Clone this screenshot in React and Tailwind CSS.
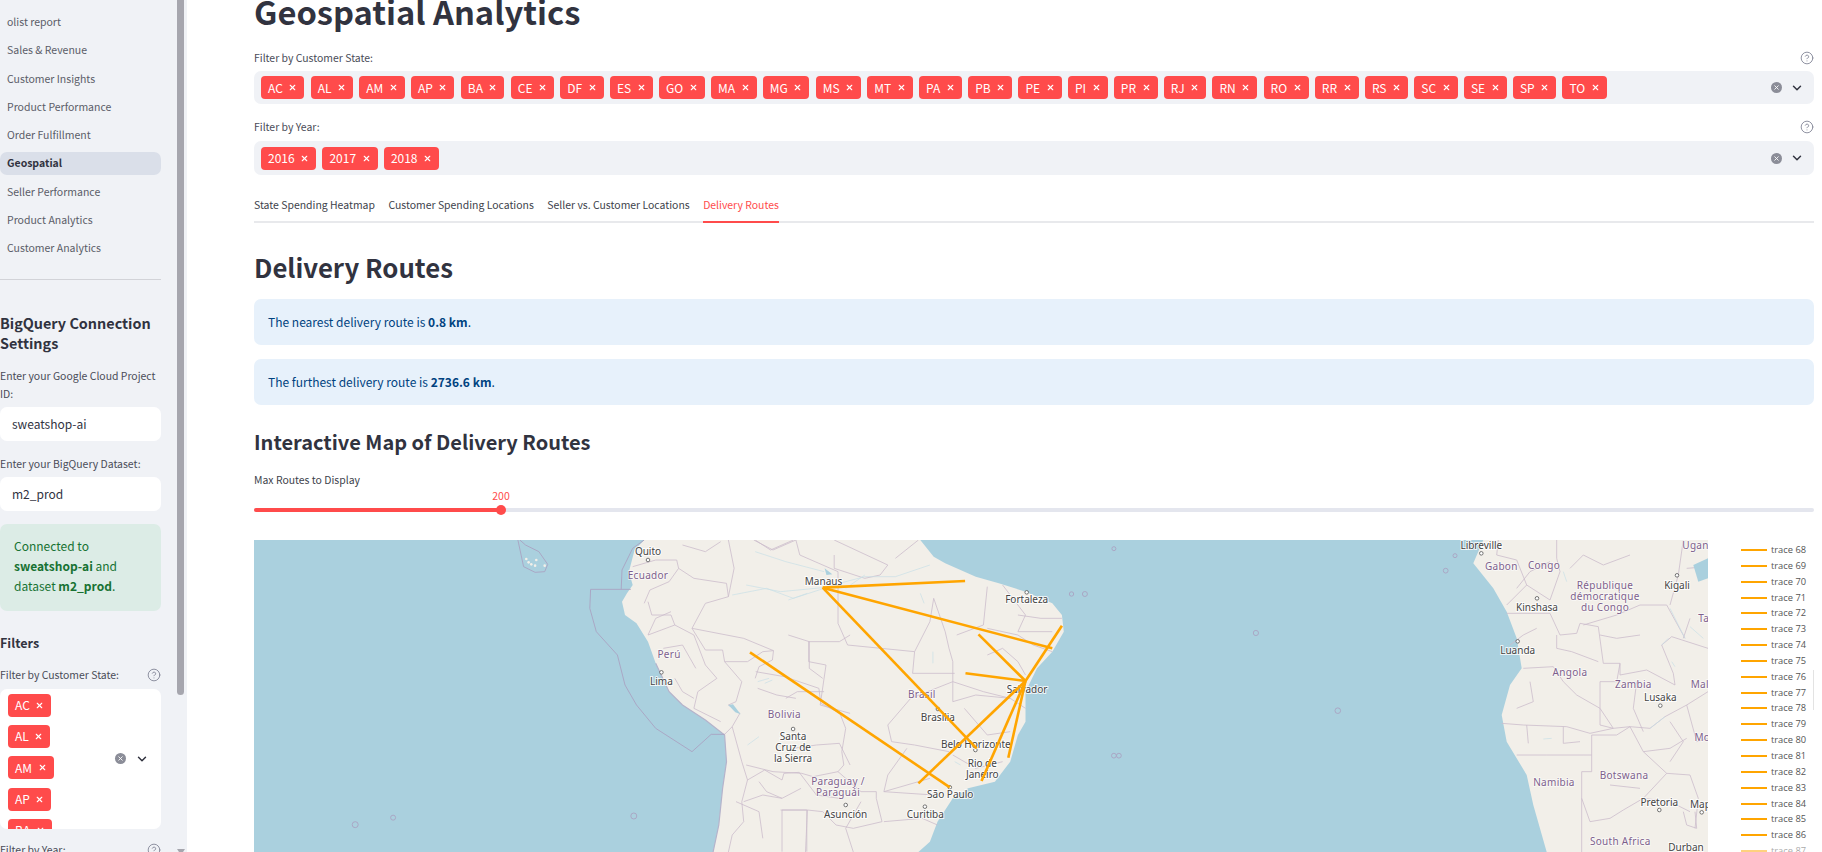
import React from "react";
import { X, ChevronDown, CircleHelp } from "lucide-react";

const z6 = ([x, y]) => [+(x / 2.613 - 5).toFixed(1), y / 3 - 5];
const z7 = ([x, y]) => [+(495 + x / 2.613).toFixed(1), y / 3 - 5];
const z8 = ([x, y]) => [+(1095 + x / 3).toFixed(1), y / 3 - 5];
const pts = (f, a) => a.map((p) => f(p).join(",")).join(" ");

const saWest = [[1030,15],[1005,45],[990,110],[1000,150],[985,175],[972,200],[980,240],[1010,265],[1040,320],[1060,385],[1095,470],[1130,510],[1190,555],[1240,600],[1245,680],[1235,760],[1225,870],[1210,951]];
const saEast = [[440,951],[470,920],[490,860],[530,790],[570,760],[640,740],[680,680],[700,600],[720,560],[720,470],[750,400],[790,350],[820,290],[815,240],[790,205],[720,170],[650,145],[590,125],[510,85],[480,65],[445,15]];
const africa = [[400,15],[370,85],[430,160],[470,230],[500,310],[515,400],[480,450],[455,540],[470,620],[530,720],[550,810],[590,951],[1074,951],[1074,15]];

const b6 = [
  [[1000,95],[1060,75],[1115,75],[1120,100],[1095,140],[1045,165],[1030,205]],
  [[1120,100],[1160,130],[1245,145],[1250,185]],
  [[1250,15],[1265,100],[1250,185],[1190,205],[1155,280],[1190,345],[1235,345],[1240,380],[1300,380],[1340,350],[1368,347],[1365,375],[1330,395],[1320,430]],
  [[1155,280],[1290,310],[1368,347]],
  [[1240,380],[1285,440],[1270,500],[1250,510],[1280,535],[1260,575],[1240,598]],
  [[1260,575],[1285,680],[1300,735],[1285,800],[1290,860],[1260,900],[1250,951]],
  [[1300,735],[1345,705],[1390,735],[1395,715],[1435,712],[1480,780],[1540,790]],
  [[1100,230],[1060,250],[1040,300],[1110,270],[1160,300],[1190,390],[1220,430],[1170,470],[1160,520],[1230,560]],
  [[1040,200],[1050,240],[1100,240],[1110,270]],
  [[1080,340],[1130,330],[1165,400]],
  [[1110,430],[1130,470],[1160,490]],
  [[1390,950],[1390,825],[1455,825],[1455,950]],
  [[1290,800],[1340,780],[1390,790],[1440,760]],
  [[1460,320],[1540,320],[1568,300]],
  [[1460,320],[1460,380],[1505,390],[1490,510],[1568,535]],
  [[1400,490],[1430,470],[1500,470]],
  [[1420,640],[1480,630],[1540,625],[1568,690]],
  [[1330,740],[1350,770],[1390,790]],
  [[1270,800],[1330,830],[1340,910]],
  [[1130,30],[1190,50],[1230,20]],
  [[1320,15],[1360,45],[1420,15]],
];
const b7 = [
  [[15,410],[90,425],[180,460],[185,505],[235,535],[250,580],[240,650],[245,690],[230,710],[290,770],[330,770],[330,790],[345,860],[270,880],[225,870],[190,830],[150,825],[145,951]],
  [[80,825],[150,825]],
  [[-10,690],[60,710],[135,715],[165,725],[230,710]],
  [[120,15],[130,60],[230,110],[230,265],[255,330],[430,350],[425,415],[535,415]],
  [[155,320],[155,400],[190,430]],
  [[220,60],[220,100],[300,130],[340,120],[360,90]],
  [[480,190],[510,290],[520,340],[530,380],[530,440],[530,500],[590,480],[680,490]],
  [[430,350],[470,260],[480,190]],
  [[540,300],[610,270],[620,155]],
  [[620,280],[700,300],[740,330],[790,350]],
  [[660,150],[720,240],[700,290]],
  [[360,570],[420,490],[530,440]],
  [[360,570],[370,620],[430,630],[520,650]],
  [[410,640],[360,720],[350,770],[470,730]],
  [[350,770],[480,780]],
  [[350,860],[450,850],[490,870]],
  [[680,490],[720,520]],
  [[530,660],[590,700],[660,680]],
  [[10,15],[60,45],[120,15]],
  [[220,15],[360,90]],
  [[440,15],[380,70]],
  [[620,360],[660,340],[700,380],[720,420]],
  [[530,440],[610,470],[680,490]],
  [[560,520],[620,600],[680,590]],
  [[700,240],[760,250],[815,250]],
  [[700,290],[790,290]],
  [[290,800],[250,880],[270,951]],
  [[100,300],[155,320]],
  [[20,460],[70,480],[120,490]],
];
const b8 = [
  [[445,15],[440,60],[500,75],[530,150]],
  [[470,235],[600,235],[630,300],[680,295],[690,265],[745,275],[760,385],[810,385],[810,420],[890,405],[975,450],[970,415],[935,330],[965,305],[1074,340]],
  [[530,150],[600,195],[630,110],[620,70],[620,15]],
  [[530,150],[470,210]],
  [[870,210],[950,210],[1005,310]],
  [[960,210],[985,120],[1000,15]],
  [[750,440],[810,440]],
  [[750,440],[750,570],[790,580],[840,575],[900,580],[945,545],[1010,510],[1074,470]],
  [[455,565],[520,570],[650,575],[720,595],[790,580]],
  [[840,575],[880,650],[950,715],[1020,720],[1045,790],[1035,880]],
  [[725,600],[725,710],[695,710],[695,951]],
  [[725,600],[800,600],[840,575]],
  [[695,790],[720,860],[780,850],[820,825],[880,790],[950,715]],
  [[530,570],[535,625]],[[640,575],[640,625],[690,620]],
  [[500,660],[590,660],[700,660],[725,660]],
  [[810,385],[800,440]],
  [[620,300],[620,340],[665,350],[745,380]],
  [[640,440],[680,480],[750,520],[790,580]],
  [[520,400],[610,395],[640,440]],
  [[1010,510],[1040,620],[1074,610]],
  [[880,650],[960,640],[1010,610]],
  [[780,750],[870,760]],
  [[880,790],[960,800],[1020,830]],
  [[1000,830],[1010,870],[1040,880],[1035,830]],
  [[870,300],[800,310],[750,300]],
  [[1010,100],[1074,95]],
  [[1020,250],[1000,310]],
  [[480,330],[520,300],[560,280]],
  [[540,440],[550,500],[500,520]],
  [[860,440],[850,520],[880,590]],
  [[660,100],[700,60],[760,90],[840,60]],
  [[700,270],[800,240],[870,210]],
  [[500,160],[540,110],[600,80]],
  [[960,560],[1000,620],[960,680]],
];
const rivers = [
  [z7, [[-10,150],[80,170],[190,158],[300,125],[380,125],[470,90]]],
  [z7, [[100,195],[150,175]]],
  [z7, [[250,160],[300,120]]],
  [z7, [[478,350],[478,385]]],
  [z7, [[445,175],[455,205]]],
  [z7, [[20,440],[50,430]]],
  [z6, [[1260,180],[1350,160],[1420,190],[1500,160]]],
  [z6, [[1320,50],[1400,80],[1500,110]]],
  [z6, [[1345,445],[1365,435]]],
  [z6, [[1300,630],[1330,605]]],
  [z7, [[535,680],[550,690]]],
  [z8, [[640,110],[650,140]]],
  [z8, [[580,612],[605,610]]],
  [z8, [[935,330],[955,310]]],
  [z8, [[965,380],[975,395]]],
  [z8, [[900,580],[945,545]]],
  [z8, [[960,220],[1005,310]]],
  [z8, [[1020,275],[1060,310]]],
];
const lakes = [
  [z8, [[1030,90],[1074,70],[1074,130],[1045,140]]],
  [z6, [[1250,510],[1262,508],[1282,538],[1268,532]]],
  [z7, [[195,100],[215,118],[200,120]]],
];
const rings = [
  [z6, 275, 869, 3], [z6, 374, 848, 2.5], [z6, 1003, 843, 3],
  [z7, 951, 41, 2], [z7, 840, 177, 2.2], [z7, 875, 177, 2.5], [z7, 1322, 294, 2.6], [z7, 1536, 527, 2.8], [z7, 951, 662, 2.4], [z7, 964, 662, 2.4],
  [z8, 287, 107, 2.4], [z8, 315, 62, 2],
];
const galapagos = [[722,72],[735,88],[748,75],[745,92],[770,92],[728,82]];
const dots = [
  [z6, 1040, 75], [z6, 1075, 412], [z6, 1419, 582], [z7, 723, 172], [z7, 491, 522], [z7, 589, 645], [z7, 522, 757], [z7, 457, 815], [z7, 250, 810],
  [z8, 394, 55], [z8, 981, 121], [z8, 561, 190], [z8, 503, 319], [z8, 931, 512], [z8, 928, 825], [z8, 1055, 832],
];
const cityLabels = [
  [z6,"Quito",1040,49],[z6,"Lima",1075,437],[z6,"Santa",1419,603],[z6,"Cruz de",1419,636],[z6,"la Sierra",1419,669],
  [z7,"Manaus",192,137],[z7,"Fortaleza",723,193],[z7,"Brasília",491,547],[z7,"Salvador",724,461],[z7,"Belo Horizonte",590,626],[z7,"Rio de",607,685],[z7,"Janeiro",607,718],[z7,"São Paulo",523,778],[z7,"Curitiba",458,837],[z7,"Asunción",250,837],
  [z8,"Libreville",394,31],[z8,"Kigali",981,150],[z8,"Kinshasa",561,215],[z8,"Luanda",503,346],[z8,"Lusaka",931,487],[z8,"Pretoria",928,801],[z8,"Maputo",1075,808],[z8,"Durban",1008,937],
];
const countryLabels = [
  [z6,"Ecuador",1040,119],[z6,"Perú",1095,358],[z6,"Bolivia",1396,537],
  [z7,"Brasil",449,478],[z7,"Paraguay /",230,738],[z7,"Paraguái",230,772],
  [z8,"Gabon",454,94],[z8,"Congo",582,90],[z8,"République",765,150],[z8,"démocratique",765,183],[z8,"du Congo",765,217],[z8,"Uganda",1055,30],[z8,"Tanzania",1110,250],[z8,"Angola",660,410],[z8,"Zambia",850,446],[z8,"Malawi",1075,447],[z8,"Moçambique",1130,607],[z8,"Namibia",612,740],[z8,"Botswana",822,720],[z8,"South Africa",811,917],
];
const H = [190, 158], S = [720, 438];
const routes = [
  [H,[562,138]],[H,[790,340]],[H,[592,640]],
  [S,[597,298]],[S,[563,415]],[S,[815,272]],[S,[440,745]],[S,[605,738]],[S,[675,668]],
  [[0,352],[522,757]],
];

function MapSvg() {
  return (
    <svg viewBox="-1 0 1454 312" width="1454" height="312" className="block shrink-0 bg-[#aad0de]">
      <polygon points={pts(z6, saWest) + " " + pts(z7, saEast)} fill="#f2efe9" />
      <polygon points={pts(z8, africa)} fill="#f2efe9" />
      <polygon points={pts(z6, [[1030,15],[1250,15],[1240,100],[1000,100]])} fill="#f2efe9" />
      <polyline points={pts(z6, saWest.slice(9))} fill="none" stroke="#b5b3cb" strokeWidth="1.2" />
      <g fill="none" stroke="#cbbccb" strokeWidth="0.8">
        {b6.map((b, i) => <polyline key={i} points={pts(z6, b)} />)}
        {b7.map((b, i) => <polyline key={i} points={pts(z7, b)} />)}
        {b8.map((b, i) => <polyline key={i} points={pts(z8, b)} />)}
      </g>
      <g fill="none" stroke="#a9a3c2" strokeWidth="0.9">
        <polyline points={pts(z6, [[995,163],[890,163],[888,220],[905,290],[960,360],[980,450],[1010,510],[1060,580],[1155,650],[1205,598],[1240,598]])} />
        <polyline points={pts(z6, [[700,15],[715,95],[745,112],[770,110],[778,88],[755,50],[720,30],[705,15]])} />
        <polyline points={pts(z6, [[1030,15],[1000,40],[972,105],[970,163]])} />
        {rings.map(([f, x, y, r], i) => { const [cx, cy] = f([x, y]); return <circle key={i} cx={cx} cy={cy} r={r} />; })}
      </g>
      <g fill="none" stroke="#c9dfe6" strokeWidth="0.7">
        {rivers.map(([f, a], i) => <polyline key={i} points={pts(f, a)} />)}
      </g>
      <g fill="#aad0de">
        {lakes.map(([f, a], i) => <polygon key={i} points={pts(f, a)} />)}
      </g>
      <g fill="#f2efe9">
        {galapagos.map((p, i) => { const [cx, cy] = z6(p); return <circle key={i} cx={cx} cy={cy} r="1.3" />; })}
      </g>
      <g fill="#fff" stroke="#555" strokeWidth="0.8">
        {dots.map(([f, x, y], i) => { const [cx, cy] = f([x, y]); return <circle key={i} cx={cx} cy={cy} r="1.8" />; })}
      </g>
      <g fontFamily="'Noto Sans', sans-serif" fontSize="10" textAnchor="middle" dominantBaseline="central" fill="#444" stroke="#ffffffcc" strokeWidth="2" paintOrder="stroke">
        {cityLabels.map(([f, t, x, y]) => { const [a, b] = f([x, y]); return <text key={t} x={a} y={b}>{t}</text>; })}
      </g>
      <g fontFamily="'Noto Sans', sans-serif" fontSize="10" letterSpacing="0.3" textAnchor="middle" dominantBaseline="central" fill="#7d5f8c" stroke="#ffffffaa" strokeWidth="1.5" paintOrder="stroke">
        {countryLabels.map(([f, t, x, y]) => { const [a, b] = f([x, y]); return <text key={t + x} x={a} y={b}>{t}</text>; })}
      </g>
      <g stroke="#ffa500" strokeWidth="2.6" fill="none">
        {routes.map(([p, q], i) => { const [x1, y1] = z7(p); const [x2, y2] = z7(q); return <line key={i} x1={x1} y1={y1} x2={x2} y2={y2} />; })}
      </g>
    </svg>
  );
}

const Tag = ({ t }) => (
  <span className="flex h-[23px] shrink-0 items-center gap-[5.5px] rounded-[4px] bg-[#ff4b4b] pl-[7px] pr-[7px] text-[12px] leading-none text-white">
    {t}
    <X size={9} strokeWidth={3} className="shrink-0" />
  </span>
);

const ClearIcon = () => (
  <span className="flex h-[11px] w-[11px] items-center justify-center rounded-full bg-[#8b8d98]">
    <X size={7} strokeWidth={3} className="text-white" />
  </span>
);

const Field = ({ tags, cls }) => (
  <div className={`flex ${cls} items-center justify-between rounded-[7px] bg-[#f0f2f6] pl-[7px] pr-[10px]`}>
    <div className="flex items-center gap-[6.3px]">{tags.map((t) => <Tag key={t} t={t} />)}</div>
    <div className="flex items-center gap-[8px]">
      <ClearIcon />
      <ChevronDown size={14} strokeWidth={2.5} className="text-[#31333f]" />
    </div>
  </div>
);

const Label = ({ children, className = "" }) => (
  <div className={`flex h-4 items-center justify-between text-[10.45px] leading-4 text-[#4a4c58] ${className}`}>
    {children}
    <CircleHelp size={14} strokeWidth={1.5} className="text-[#808495]" />
  </div>
);

const states = "AC AL AM AP BA CE DF ES GO MA MG MS MT PA PB PE PI PR RJ RN RO RR RS SC SE SP TO".split(" ");
const nav = ["olist report", "Sales & Revenue", "Customer Insights", "Product Performance", "Order Fulfillment", "Geospatial", "Seller Performance", "Product Analytics", "Customer Analytics"];
const traces = Array.from({ length: 20 }, (_, i) => 68 + i);
const tabs = ["State Spending Heatmap", "Customer Spending Locations", "Seller vs. Customer Locations"];

function Sidebar() {
  return (
    <aside className="relative h-full w-[187px] shrink-0 overflow-hidden bg-[#f0f2f6]">
      <div className="w-[161px]">
        <nav className="flex flex-col gap-[5.27px] pt-[10.5px]">
          {nav.map((n) => (
            <div key={n} className={n === "Geospatial" ? "flex h-[23px] items-center rounded-[7px] bg-[#dadfe9] px-[7px] text-[10.5px] font-semibold text-[#31333f]" : "flex h-[23px] items-center px-[7px] text-[10.5px] text-[#5b5d68]"}>{n}</div>
          ))}
        </nav>
        <div className="mt-[19px] border-t border-[#d2d3d8]" />
        <h2 className="mt-[33px] text-[14.4px] font-semibold leading-5 text-[#31333f]">BigQuery Connection Settings</h2>
        <div className="mt-[14px] text-[10.45px] leading-[18px] text-[#4a4c58]">Enter your Google Cloud Project ID:</div>
        <div className="mt-[4px] flex h-[34px] items-center rounded-[7px] bg-white px-3 text-[12px] text-[#31333f]">sweatshop-ai</div>
        <div className="mt-[15px] h-4 text-[10.45px] leading-4 text-[#4a4c58]">Enter your BigQuery Dataset:</div>
        <div className="mt-[5px] flex h-[34px] items-center rounded-[7px] bg-white px-3 text-[12px] text-[#31333f]">m2_prod</div>
        <div className="mt-[13px] h-[87px] rounded-[7px] bg-[#dcece6] px-[14px] py-[12px] text-[12px] leading-5 text-[#177233]">
          Connected to <b className="font-semibold">sweatshop-ai</b> and dataset <b className="font-semibold">m2_prod</b>.
        </div>
        <h3 className="mt-[20px] h-6 text-[12.6px] font-semibold leading-6 text-[#31333f]">Filters</h3>
        <Label className="mt-[12px]">Filter by Customer State:</Label>
        <div className="mt-[6px] flex h-[140px] items-center justify-between overflow-hidden rounded-[7px] bg-white pl-[8px] pr-[12px]">
          <div className="flex h-full flex-col items-start gap-[8.3px] pt-[5px]">
            {states.slice(0, 5).map((t) => <Tag key={t} t={t} />)}
          </div>
          <div className="flex items-center gap-[9px]">
            <ClearIcon />
            <ChevronDown size={14} strokeWidth={2.5} className="text-[#31333f]" />
          </div>
        </div>
        <Label className="mt-[13px]">Filter by Year:</Label>
      </div>
      <div className="absolute left-[177px] top-[-8px] h-[703px] w-[7px] rounded-full bg-[#a6a6ae]" />
      <div className="absolute bottom-[-3px] left-[177px] h-0 w-0 border-x-[4px] border-t-[6px] border-x-transparent border-t-[#a6a6ae]" />
    </aside>
  );
}

export default function App() {
  return (
    <div className="flex h-[852px] w-[1822px] overflow-hidden bg-white font-['Noto_Sans_CJK_SC',sans-serif] text-[#31333f]">
      <Sidebar />
      <main className="relative h-full w-[1635px] overflow-hidden pl-[67px] pr-[8px]">
        <h1 className="mt-[-11px] h-[44px] text-[32.7px] font-bold leading-[44px]">Geospatial Analytics</h1>
        <Label className="mt-[17px]">Filter by Customer State:</Label>
        <Field tags={states} cls="mt-[5px] h-[33px]" />
        <Label className="mt-[15px]">Filter by Year:</Label>
        <Field tags={["2016", "2017", "2018"]} cls="mt-[6px] h-[34px]" />
        <div className="mt-[15px] flex h-[33px] gap-[13.5px] border-b-2 border-[#e8e9ec] text-[10.45px]">
          {tabs.map((t) => <div key={t} className="flex h-[33px] items-center pb-[3px] text-[#3d3f4b]">{t}</div>)}
          <div className="flex h-[33px] items-center border-b-2 border-[#ff4b4b] pb-[1px] text-[#ff4b4b]">Delivery Routes</div>
        </div>
        <h2 className="mt-[26px] h-[36px] text-[25.75px] font-semibold leading-[36px]">Delivery Routes</h2>
        <div className="mt-[14px] flex h-[46px] items-center rounded-[7px] bg-[#e7f1fb] px-[14px] text-[12px] text-[#004280]">
          <span>The nearest delivery route is <b className="font-semibold">0.8 km</b>.</span>
        </div>
        <div className="mt-[14px] flex h-[46px] items-center rounded-[7px] bg-[#e7f1fb] px-[14px] text-[12px] text-[#004280]">
          <span>The furthest delivery route is <b className="font-semibold">2736.6 km</b>.</span>
        </div>
        <h3 className="mt-[22px] h-[30px] text-[20px] font-semibold leading-[30px]">Interactive Map of Delivery Routes</h3>
        <div className="mt-[15px] h-4 text-[10.45px] leading-4 text-[#3d3f4b]">Max Routes to Display</div>
        <div className="relative h-[32px]">
          <div className="absolute inset-x-0 top-[20px] h-1 rounded-full bg-[#e4e6ee]" />
          <div className="absolute left-0 top-[20px] h-1 w-[247px] rounded-full bg-[#ff4b4b]" />
          <div className="absolute left-[242px] top-[17px] h-[10px] w-[10px] rounded-full bg-[#ff4b4b]" />
          <div className="absolute left-[237px] top-0 w-5 text-center text-[10.5px] leading-4 text-[#ff4b4b]">200</div>
        </div>
        <div className="relative mt-[20px] flex h-[312px] overflow-hidden">
          <MapSvg />
          <div className="flex flex-col gap-[1.85px] pl-[33px] pt-[3px]">
            {traces.map((n) => (
              <div key={n} className={`flex h-[14px] shrink-0 items-center gap-[4px] whitespace-nowrap font-['Open_Sans',sans-serif] text-[9.3px] leading-[14px] text-[#555] ${n === 87 ? "opacity-50" : ""}`}>
                <span className="h-[2px] w-[26px] bg-[#ffa500]" />
                trace {n}
              </div>
            ))}
          </div>
          <div className="absolute right-0 top-[130px] h-[40px] w-px bg-[#e3e3e3]" />
        </div>
      </main>
    </div>
  );
}
